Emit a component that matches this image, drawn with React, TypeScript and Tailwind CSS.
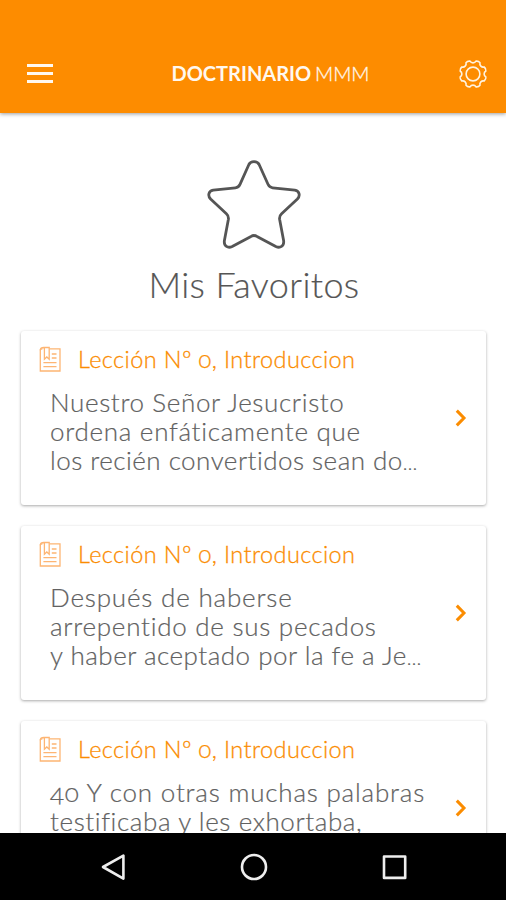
type Line = { text: string; className: string; cut?: boolean };

const lessons: Line[][] = [
  [
    { text: 'Nuestro Señor Jesucristo', className: 'tracking-[0.64px]' },
    { text: 'ordena enfáticamente que', className: 'tracking-[0.72px]' },
    { text: 'los recién convertidos sean do', className: 'tracking-[0.48px]', cut: true },
  ],
  [
    { text: 'Después de haberse', className: 'tracking-[0.82px]' },
    { text: 'arrepentido de sus pecados', className: 'tracking-[0.74px]' },
    { text: 'y haber aceptado por la fe a Je', className: 'tracking-[0.5px]', cut: true },
  ],
  [
    { text: '40 Y con otras muchas palabras', className: 'tracking-[0.8px]' },
    { text: 'testificaba y les exhortaba,', className: 'tracking-[0.6px]' },
  ],
];

function gearPath() {
  const at = (r: number, deg: number) => {
    const a = (deg * Math.PI) / 180;
    return `${(16 + r * Math.cos(a)).toFixed(2)} ${(16 + r * Math.sin(a)).toFixed(2)}`;
  };
  let d = '';
  for (let i = 0; i < 8; i++) {
    const c = 22.5 + i * 45;
    d += `${i ? 'L' : 'M'}${at(13.2, c - 9.5)}Q${at(14.3, c)} ${at(13.2, c + 9.5)}`;
    d += `A3.4 3.4 0 0 0 ${at(13.2, c + 35.5)}`;
  }
  return d + 'Z';
}

function GearIcon() {
  return (
    <svg viewBox="0 0 32 32" className="h-8 w-8" fill="none" stroke="#fff3df" strokeWidth="1.6" strokeLinejoin="round">
      <path d={gearPath()} />
      <circle cx="16" cy="16" r="6.9" />
    </svg>
  );
}

function StarIcon() {
  return (
    <svg viewBox="206 158 96 92" className="h-[92px] w-24" fill="none" stroke="#555" strokeWidth="2.8" strokeLinejoin="round">
      <path d="M248.9 164.5C250.8 160.7 257.2 160.7 259.1 164.5L268 184.3Q269.4 187.4 272.6 187.8L294.8 190.2C299.4 191 300.6 195.6 297.4 199L281.6 213.8Q279.2 216 279.6 219.2L283.6 240.6C284.4 246.4 280 248.4 275.8 246.5L257 236.4Q254 234.6 251 236.4L232.2 246.5C228 248.4 223.6 246.4 224.4 240.6L228.4 219.2Q228.8 216 226.4 213.8L210.6 199C207.4 195.6 208.6 191 213.2 190.2L235.4 187.8Q238.6 187.4 240 184.3Z" />
    </svg>
  );
}

function BookIcon() {
  return (
    <svg viewBox="0 0 22 26" className="h-[26px] w-[22px] shrink-0" fill="none" stroke="#fdb573" strokeWidth="1.3">
      <path d="M3.5 2.9H2.6Q1.3 2.9 1.3 4.2V25H21V2.9H10.5" />
      <path d="M1.3 4.2Q1.5 1.5 4.8 1.5H10.2V13.2L7.8 11L5.4 13.2V1.5" />
      <path d="M12.8 8H17.5M12.8 12H17.5M4.4 16.6H17.5M4.4 20.6H17.5" />
    </svg>
  );
}

function LessonCard({ lines }: { lines: Line[] }) {
  return (
    <article className="flex h-[174px] shrink-0 items-center rounded-[3px] bg-white pr-[19px] shadow-[0_1px_3px_rgba(0,0,0,0.34)]">
      <div className="h-full flex-1 pl-[18px] pt-[14px]">
        <h2 className="flex h-[28px] items-center whitespace-nowrap text-[23.5px] font-light leading-[28px] tracking-[0.4px] text-[#fb8c00] oldstyle-nums [-webkit-text-stroke:0.3px_#fb8c00]">
          <BookIcon />
          <span className="ml-[17px]">Lección Nº 0, Introduccion</span>
        </h2>
        <p className="pl-[11px] pt-[14.5px] text-[26px] font-light leading-[29px] text-[#616161] oldstyle-nums [-webkit-text-stroke:0.2px_#616161]">
          {lines.map((line) => (
            <span key={line.text} className={`block whitespace-nowrap ${line.className}`}>
              {line.text}
              {line.cut && <span className="text-[20px] tracking-normal">…</span>}
            </span>
          ))}
        </p>
      </div>
      <svg viewBox="0 0 12 18" className="h-[18px] w-3" fill="none" stroke="#fb8c00" strokeWidth="3">
        <path d="M1.8 1.6L9 9L1.8 16.4" />
      </svg>
    </article>
  );
}

export default function App() {
  return (
    <div className="flex h-[900px] w-[506px] flex-col overflow-hidden bg-white font-['Lato',sans-serif]">
      <header className="z-10 flex h-[112.5px] shrink-0 items-end justify-between bg-[#fd8c00] pb-[23px] pl-[27px] pr-[17px] shadow-[0_1px_4px_rgba(0,0,0,0.4)]">
        <button className="flex h-[32px] w-[32px] flex-col justify-center gap-[4.7px]" aria-label="Menú">
          <span className="h-[3px] w-[26px] bg-[#fff8ef]" />
          <span className="h-[3px] w-[26px] bg-[#fff8ef]" />
          <span className="h-[3px] w-[26px] bg-[#fff8ef]" />
        </button>
        <h1 className="whitespace-nowrap pb-px pl-[25px] text-[20px] font-bold leading-[32px] text-[#fff8ef]">
          DOCTRINARIO <span className="-ml-px font-light [-webkit-text-stroke:0.3px_#fff8ef]">MMM</span>
        </h1>
        <button aria-label="Ajustes">
          <GearIcon />
        </button>
      </header>

      <main className="flex min-h-0 flex-1 flex-col overflow-hidden">
        <div className="flex h-[218.5px] shrink-0 flex-col items-center pl-[2px] pt-[45.5px]">
          <StarIcon />
          <p className="pt-[13px] text-[36px] font-light leading-[42px] tracking-[0.36px] text-[#555] [-webkit-text-stroke:0.2px_#555]">Mis Favoritos</p>
        </div>
        <section className="flex flex-col gap-[21px] pl-[21px] pr-5">
          {lessons.map((lines) => (
            <LessonCard key={lines[0].text} lines={lines} />
          ))}
        </section>
      </main>

      <nav className="z-10 flex h-[67px] shrink-0 items-center justify-between bg-black pl-[98px] pr-[96.5px]">
        <svg viewBox="0 0 32 32" className="h-8 w-8" fill="none" stroke="#eee" strokeWidth="2.6" strokeLinejoin="round">
          <path d="M25.4 4.6V27.6L5 16Z" />
        </svg>
        <svg viewBox="0 0 32 32" className="h-8 w-8" fill="none" stroke="#eee" strokeWidth="2.6">
          <circle cx="16" cy="16" r="12" />
        </svg>
        <svg viewBox="0 0 32 32" className="h-8 w-8" fill="none" stroke="#eee" strokeWidth="2.6" strokeLinejoin="round">
          <rect x="6" y="5.5" width="21.2" height="21.4" />
        </svg>
      </nav>
    </div>
  );
}
